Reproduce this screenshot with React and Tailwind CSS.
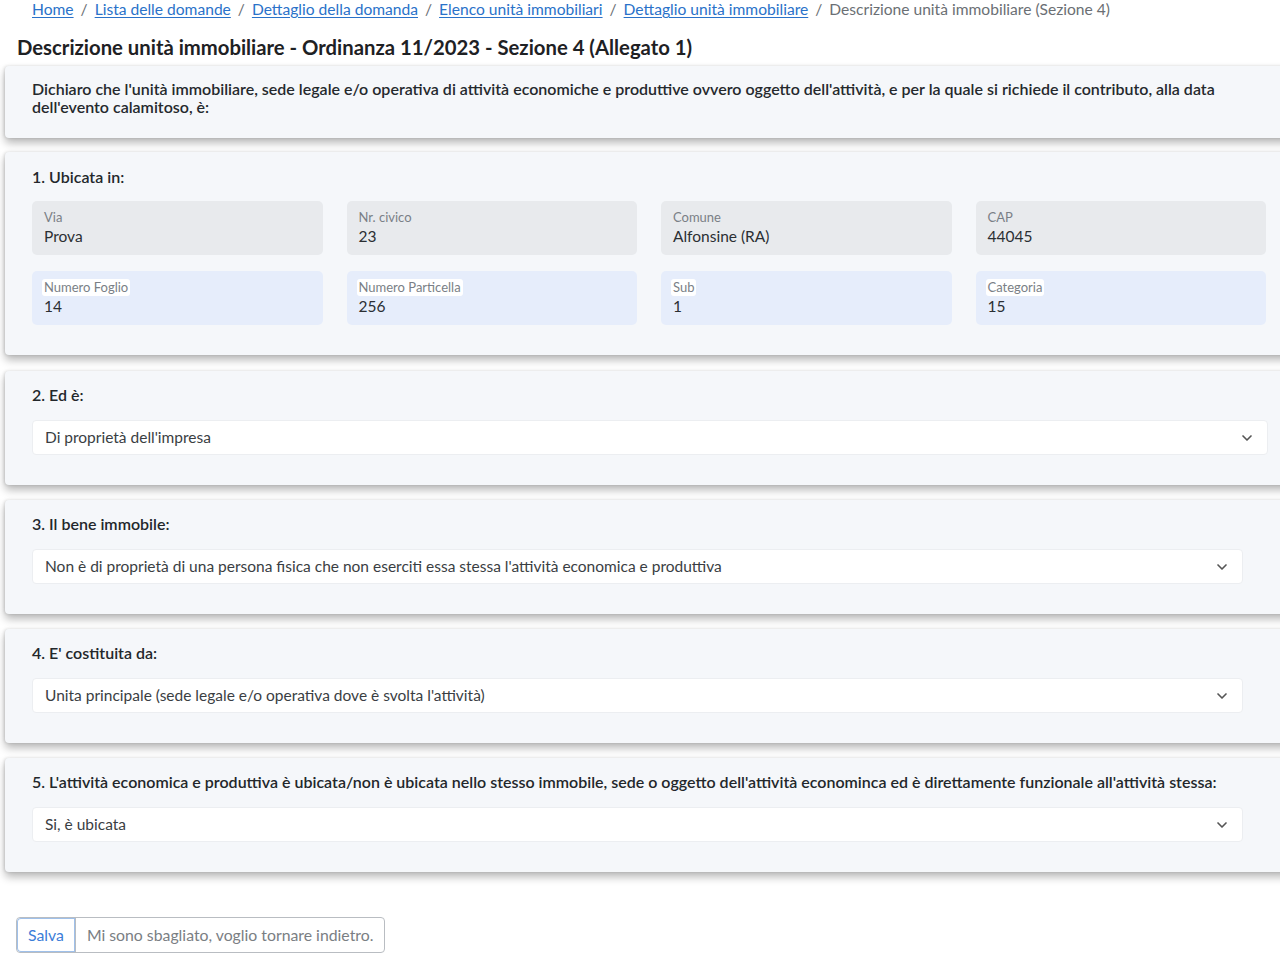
import { ChevronDown } from "lucide-react";

const crumbs = [
  "Home",
  "Lista delle domande",
  "Dettaglio della domanda",
  "Elenco unità immobiliari",
  "Dettaglio unità immobiliare",
];

const Field = ({ label, value, blue }) => (
  <div
    className={`h-[54px] rounded-[5px] px-3 pt-[8px] ${
      blue ? "bg-[#e6edfb]" : "bg-[#e8eaed]"
    }`}
  >
    <div className="flex">
      <span
        className={`text-[13px] leading-[17px] text-[#7a7f86] ${
          blue ? "bg-white rounded-[3px] px-[2px] -ml-[2px]" : ""
        }`}
      >
        {label}
      </span>
    </div>
    <div className="text-[15.5px] leading-[20px] text-[#2b2f33]">{value}</div>
  </div>
);

const Select = ({ value, wide }) => (
  <div
    className={`flex items-center justify-between h-[35px] bg-white border border-[#eceef1] rounded-[4px] pl-3 pr-[12px] text-[15.5px] text-[#3a3e43] ${
      wide ? "w-full" : "w-[1211px]"
    }`}
  >
    <span>{value}</span>
    <ChevronDown className="w-4 h-4 text-[#555]" strokeWidth={2.5} />
  </div>
);

const Card = ({ children, className = "" }) => (
  <div
    className={`ml-[5px] w-[1290px] bg-[#f5f7fa] rounded-l-[4px] shadow-[0_5px_8px_rgba(0,0,0,0.28),-1px_0_3px_rgba(0,0,0,0.12)] px-[27px] ${className}`}
  >
    {children}
  </div>
);

const Question = ({ title, value, wide, className }) => (
  <Card className={`pt-[13px] pb-[30px] ${className}`}>
    <div className="text-[16px] font-semibold text-[#23272b] leading-[22px] mb-[14px]">
      {title}
    </div>
    <Select value={value} wide={wide} />
  </Card>
);

const App = () => {
  return (
    <div
      className="w-[1280px] h-[960px] overflow-hidden bg-white"
      style={{ fontFamily: '"Lato", "Noto Sans", sans-serif' }}
    >
      {/* Breadcrumb */}
      <div className="pl-[32px] h-[20px] text-[15.6px] leading-[18px] text-[#6b6f74] flex items-center gap-[7px] -mt-[1px]">
        {crumbs.map((c) => (
          <span key={c} className="flex items-center gap-[7px]">
            <a className="text-[#2a72c9] underline underline-offset-2">{c}</a>
            <span>/</span>
          </span>
        ))}
        <span>Descrizione unità immobiliare (Sezione 4)</span>
      </div>

      <h1 className="pl-[17px] mt-[16px] text-[20.3px] font-bold leading-[24px] text-[#1e2124]">
        Descrizione unità immobiliare - Ordinanza 11/2023 - Sezione 4 (Allegato 1)
      </h1>

      <div className="flex flex-col mt-[7px]">
        <Card className="pt-[14px] pb-[22px]">
          <p className="text-[16px] font-semibold leading-[18px] text-[#25292d] w-[1200px]">
            Dichiaro che l'unità immobiliare, sede legale e/o operativa di attività
            economiche e produttive ovvero oggetto dell'attività, e per la quale si
            richiede il contributo, alla data dell'evento calamitoso, è:
          </p>
        </Card>

        <Card className="mt-[14px] pt-[14px] pb-[30px]">
          <div className="text-[16px] font-semibold text-[#23272b] leading-[22px] mb-[13px]">
            1. Ubicata in:
          </div>
          <div className="grid grid-cols-4 gap-x-[24px] gap-y-[16px] w-[1234px]">
            <Field label="Via" value="Prova" />
            <Field label="Nr. civico" value="23" />
            <Field label="Comune" value="Alfonsine (RA)" />
            <Field label="CAP" value="44045" />
            <Field label="Numero Foglio" value="14" blue />
            <Field label="Numero Particella" value="256" blue />
            <Field label="Sub" value="1" blue />
            <Field label="Categoria" value="15" blue />
          </div>
        </Card>

        <Question className="mt-[16px]" title="2. Ed è:" value="Di proprietà dell'impresa" wide />
        <Question
          className="mt-[15px]"
          title="3. Il bene immobile:"
          value="Non è di proprietà di una persona fisica che non eserciti essa stessa l'attività economica e produttiva"
        />
        <Question
          className="mt-[15px]"
          title="4. E' costituita da:"
          value="Unita principale (sede legale e/o operativa dove è svolta l'attività)"
        />
        <Question
          className="mt-[15px]"
          title="5. L'attività economica e produttiva è ubicata/non è ubicata nello stesso immobile, sede o oggetto dell'attività econominca ed è direttamente funzionale all'attività stessa:"
          value="Si, è ubicata"
        />
      </div>

      {/* Actions */}
      <div className="ml-[16px] mt-[45px] inline-flex h-[36px] border border-[#b9bdc2] rounded-[4px] text-[15.8px] overflow-hidden">
        <button className="px-[11px] text-[#3b7dd8] border-r border-[#b9bdc2] shadow-[inset_0_0_0_1px_#9fc0ea] rounded-l-[4px]">
          Salva
        </button>
        <button className="px-[11px] text-[#7a7e83]">
          Mi sono sbagliato, voglio tornare indietro.
        </button>
      </div>
    </div>
  );
};

export default App;
